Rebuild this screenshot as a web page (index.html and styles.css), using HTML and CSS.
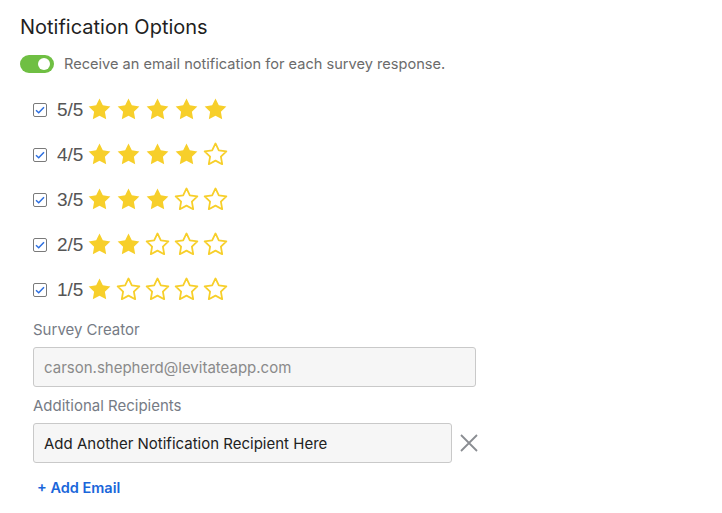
FILE: index.html
```html
<!DOCTYPE html>
<html lang="en">
<head>
  <meta charset="UTF-8">
  <title>Notification Options</title>
  <link rel="stylesheet" href="styles.css">
</head>
<body>
  <h2 class="title">Notification Options</h2>
  <div class="toggle-row">
    <span class="toggle"><span class="knob"></span></span>
    <span class="toggle-text">Receive an email notification for each survey response.</span>
  </div>

  <div class="ratings" id="ratings"></div>

  <div class="field">
    <div class="label">Survey Creator</div>
    <div class="input readonly">carson.shepherd@levitateapp.com</div>
  </div>

  <div class="field">
    <div class="label">Additional Recipients</div>
    <div class="recipient">
      <div class="input short">Add Another Notification Recipient Here</div>
      <svg class="remove" width="18" height="18" viewBox="0 0 18 18">
        <path d="M1 1L17 17M17 1L1 17" stroke="#8a8d92" stroke-width="1.8" fill="none"/>
      </svg>
    </div>
  </div>

  <a class="add-email" href="#">+ Add Email</a>

  <script>
    const starPath = 'M12 2.2l2.95 6.1 6.7.95-4.85 4.7 1.15 6.65L12 17.45l-5.95 3.15 1.15-6.65-4.85-4.7 6.7-.95z';
    const ratings = document.getElementById('ratings');

    // one row per score, 5 down to 1
    for (let score = 5; score >= 1; score--) {
      let stars = '';
      for (let i = 1; i <= 5; i++) {
        const full = i <= score;
        stars += '<svg class="star" width="27" height="27" viewBox="0 0 24 24"><path d="' + starPath + '" ' +
          (full ? 'fill="#f7cf2a"' : 'fill="none" stroke="#f7cf2a" stroke-width="1.6" stroke-linejoin="round"') +
          '/></svg>';
      }
      const row = document.createElement('div');
      row.className = 'rating-row';
      row.innerHTML =
        '<span class="check"><svg width="10" height="8" viewBox="0 0 10 8"><path d="M1 4.2L3.7 6.8 9 1.2" stroke="#2d6fe0" stroke-width="1.5" fill="none"/></svg></span>' +
        '<span class="score">' + score + '/5</span>' +
        '<span class="stars">' + stars + '</span>';
      ratings.appendChild(row);
    }
  </script>
</body>
</html>
```

FILE: styles.css
```css
body {
  margin: 0;
  padding: 15px 20px 0 20px;
  font-family: Inter, "Noto Sans", sans-serif;
  background: #fff;
  color: #222;
}
.title {
  margin: 0;
  font-size: 20px;
  font-weight: 400;
  color: #1f1f1f;
  line-height: 24px;
}
.toggle-row {
  display: flex;
  align-items: center;
  gap: 10px;
  margin-top: 16px;
}
.toggle {
  width: 34px;
  height: 18px;
  border-radius: 9px;
  background: #6fbf43;
  display: flex;
  align-items: center;
  justify-content: flex-end;
  padding-right: 4px;
  box-sizing: border-box;
}
.knob {
  width: 12px;
  height: 12px;
  border-radius: 50%;
  background: #fff;
}
.toggle-text {
  font-size: 14.6px;
  color: #6b6b6b;
}
.ratings {
  margin-top: 14px;
  padding-left: 13px;
}
.rating-row {
  display: flex;
  align-items: center;
  height: 45px;
}
.check {
  width: 12px;
  height: 12px;
  border: 1px solid #7a7a7a;
  border-radius: 2px;
  display: flex;
  align-items: center;
  justify-content: center;
  margin-right: 10px;
}
.score {
  font-family: "Liberation Sans", Arial, sans-serif;
  font-size: 19px;
  color: #555;
  width: 29px;
}
.stars {
  display: flex;
  gap: 2px;
}
.star { display: block; }
.field {
  margin-left: 13px;
  margin-top: 8px;
}
.label {
  font-size: 15px;
  color: #767b85;
  line-height: 20px;
  margin-bottom: 7px;
}
.input {
  width: 443px;
  height: 40px;
  box-sizing: border-box;
  border: 1px solid #c9c9c9;
  border-radius: 3px;
  background: #f6f6f6;
  padding: 0 10px;
  display: flex;
  align-items: center;
  font-size: 15px;
  color: #222;
}
.readonly { color: #8a8a8a; }
.short { width: 419px; }
.field + .field { margin-top: 9px; }
.recipient {
  display: flex;
  align-items: center;
  gap: 8px;
}
.remove { display: block; }
.add-email {
  display: inline-block;
  margin: 16px 0 0 17px;
  font-size: 14.5px;
  font-weight: 600;
  color: #1a66da;
  text-decoration: none;
}
```
